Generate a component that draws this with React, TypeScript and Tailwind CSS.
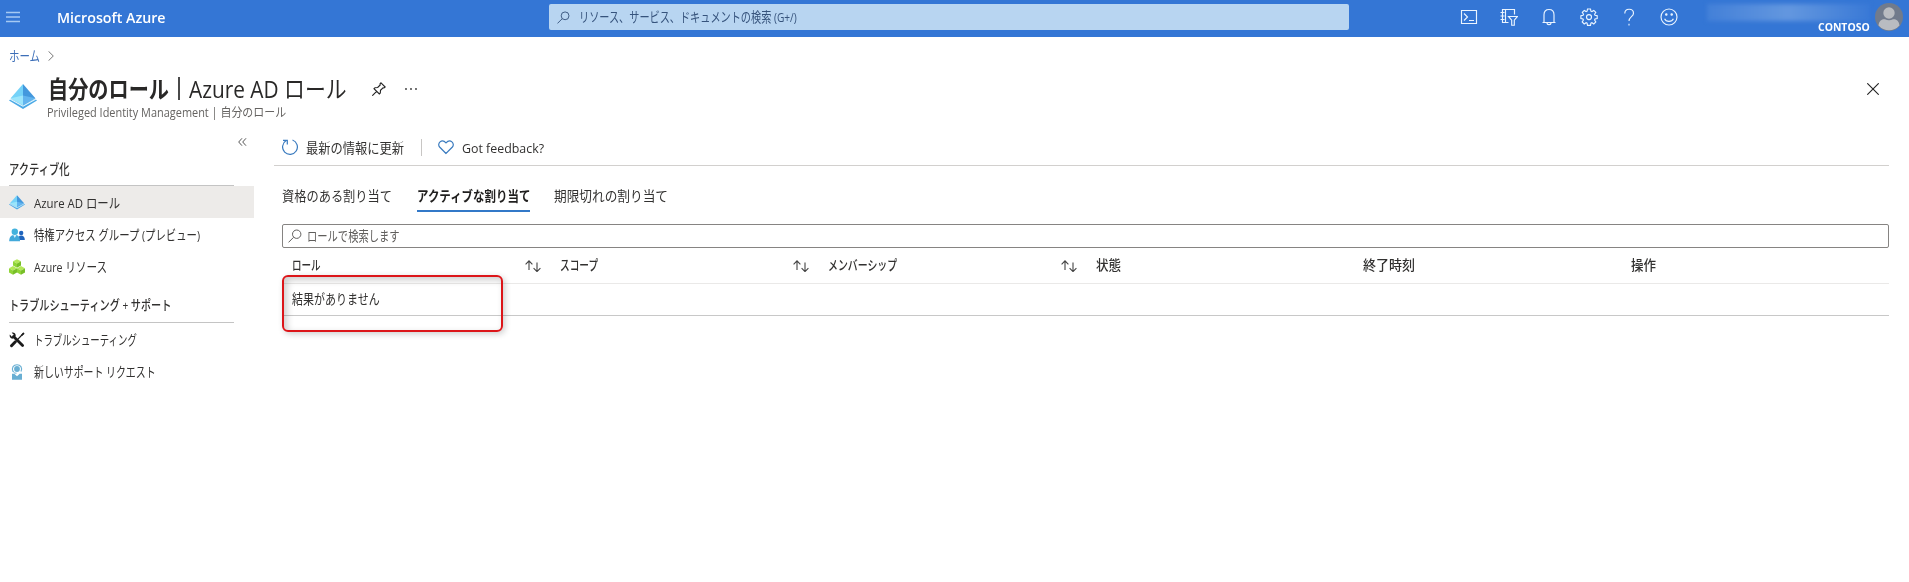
import { useLayoutEffect, useRef, useState } from 'react';

const FONT = "font-['Open_Sans','Noto_Sans_CJK_JP',sans-serif]";

/* One line of text condensed or widened to an exact width. */
function Fit({ w, className = '', children }: { w: number; className?: string; children: string }) {
  const ref = useRef<HTMLSpanElement>(null);
  const [scale, setScale] = useState(1);
  useLayoutEffect(() => {
    if (ref.current) setScale(w / ref.current.offsetWidth);
  }, [w]);
  return (
    <span className={`flex shrink-0 items-center ${className}`} style={{ width: w }}>
      <span ref={ref} className="inline-block origin-left whitespace-nowrap" style={{ transform: `scaleX(${scale})` }}>
        {children}
      </span>
    </span>
  );
}

function Pyramid({ className }: { className: string }) {
  return (
    <svg viewBox="0 0 28 28" className={className}>
      <path d="M0 18.500 2 16.800 14 23 26 16.800 28 18.500 14 27Z" fill="#4aa9e6" />
      <path d="M14 2 1.600 16.300 14 23.300Z" fill="#74d2f8" />
      <path d="M14 2 26.400 16.300 14 23.300Z" fill="#4398dd" />
      <path d="M14 13.500 1.600 16.300 14 23.300Z" fill="#9be5fb" />
      <path d="M14 13.500 26.400 16.300 14 23.300Z" fill="#62b4ee" />
      <path d="M1 17.100 14 24.200 27 17.100" fill="none" stroke="#e2f6fe" strokeWidth="1.100" />
    </svg>
  );
}

function People() {
  return (
    <svg viewBox="0 0 16 16" className="size-4">
      <circle cx="12.200" cy="6" r="2.200" fill="#2065bd" />
      <path d="M9 13c0-3 1-4.600 3.200-4.600s3.600 1.600 3.600 4.600Z" fill="#2065bd" />
      <circle cx="5.800" cy="4.700" r="3.200" fill="#43b2dd" />
      <path d="M.200 14.200c0-4.300 2-6.200 5.600-6.200s5.200 1.900 5.200 6.200Z" fill="#43a9da" />
      <path d="M4.200 8.100h3.200l-1.600 2.900Z" fill="#d8f1fb" />
    </svg>
  );
}

function Cube({ x, y }: { x: number; y: number }) {
  return (
    <g transform={`translate(${x} ${y})`}>
      <path d="M4 0 8 2.100 4 4.300 0 2.100Z" fill="#b4e858" />
      <path d="M0 2.100 4 4.300V8.600L0 6.400Z" fill="#8fd437" />
      <path d="M8 2.100 4 4.300V8.600l4-2.200Z" fill="#78bf28" />
    </g>
  );
}

function Cubes() {
  return (
    <svg viewBox="0 0 16 16" className="size-4">
      <Cube x={4} y={0.2} />
      <Cube x={0} y={7.1} />
      <Cube x={8} y={7.1} />
    </svg>
  );
}

function Tools() {
  return (
    <svg viewBox="0 0 16 16" className="size-4">
      <path d="M4.500 4.500 13.600 13.600" stroke="#1b1b1b" strokeWidth="2.800" strokeLinecap="round" />
      <path d="M2.700.700 4.800 2.800 4.400 4.300 2.900 4.700.800 2.600C.100 4.600 1.600 7 4 6.600L6.700 4.300C7.100 1.800 5 0 2.700.700Z" fill="#1b1b1b" />
      <path d="M14.800 1 8.500 7.600" stroke="#1b1b1b" strokeWidth="1.300" />
      <path d="M14.200.400 15.600 1.800 13 3.900 12 3Z" fill="#1b1b1b" />
      <path d="M6.400 9.800 2.500 13.700" stroke="#1b1b1b" strokeWidth="3" strokeLinecap="round" />
    </svg>
  );
}

function SupportPerson() {
  return (
    <svg viewBox="0 0 16 16" className="size-4">
      <path d="M4 7.500C2.300 3.500 4.500.700 8 .700s5.700 2.800 4 6.800" fill="none" stroke="#69afd3" strokeWidth="1.100" />
      <circle cx="8" cy="5" r="2.900" fill="#69afd3" />
      <path d="M4 7c.500 1.700 1.800 2.200 3.500 2.200" fill="none" stroke="#69afd3" />
      <path d="M3 9.700h2.300L8 12.200l2.700-2.500H13v6H3Z" fill="#69afd3" />
    </svg>
  );
}

function Magnifier({ className }: { className: string }) {
  return (
    <svg viewBox="0 0 14 14" fill="none" stroke="currentColor" className={className}>
      <circle cx="8.700" cy="5.200" r="4.200" />
      <path d="M5.600 8.300.500 13.400" />
    </svg>
  );
}

function HeaderIcons() {
  const cls = 'size-[18px]';
  const p = { viewBox: '0 0 18 18', fill: 'none', stroke: 'currentColor', strokeWidth: 1.15, className: cls };
  const teeth = 'M7.500 1h3l.4 2.200 1 .400 1.900-1.200 2 2-1.200 1.900.400 1 2.200.400v2.900l-2.200.400-.400 1 1.200 1.900-2 2-1.900-1.200-1 .400-.400 2.200h-3l-.400-2.200-1-.400-1.900 1.200-2-2 1.200-1.900-.400-1L.900 10.600V7.700l2.200-.400.400-1L2.300 4.400l2-2 1.800 1.200 1-.400Z';
  return (
    <div className="flex items-center gap-[22px] text-[#eaf4ff]">
      <svg {...p}><path d="M1.500 2.500h15v13h-15ZM4 5.500 7.500 9 4 12.500M9 12.500h5" /></svg>
      <svg {...p}>
        <path d="M8.500 14.500h-6v-13h12v5M5.500 1.500v13M.500 4.500h4M.500 8h4M.500 11.500h4" />
        <path d="M8.500 8.500h9l-3.200 3.700v5h-2.600v-5Z" />
      </svg>
      <svg {...p}><path d="M2.500 14.500h13M4 14.500V6.800C4 3.500 6 1.500 9 1.500s5 2 5 5.300v7.700M7 14.700c0 2.600 4 2.600 4 0" /></svg>
      <svg {...p}><path d={teeth} /><circle cx="9" cy="9.100" r="2.500" /></svg>
      <svg {...p}><path d="M4.800 5.400c0-2.500 1.800-4.200 4.300-4.200 2.600 0 4.400 1.600 4.400 4 0 3.400-4.500 3.600-4.500 7.800" /><path d="M9 15.800v1.600" /></svg>
      <svg {...p}>
        <circle cx="9" cy="9" r="8" /><path d="M4.600 10.800c1.500 3.500 7.300 3.500 8.800 0" />
        <circle cx="6.300" cy="6.500" r=".7" fill="currentColor" /><circle cx="11.700" cy="6.500" r=".7" fill="currentColor" />
      </svg>
    </div>
  );
}

function TopBar() {
  return (
    <header className="flex h-[37px] items-center bg-[#3476d5] pb-[3px] text-white">
      <svg viewBox="0 0 14 12" className="ml-1.5 mr-[37px] h-3 w-3.5 shrink-0" stroke="#a5c9f3" strokeWidth="1.300">
        <path d="M0 1.500h14M0 6h14M0 10.500h14" />
      </svg>
      <Fit w={109} className="text-[15px] font-semibold">Microsoft Azure</Fit>
      <div className="ml-[383px] flex h-[26px] w-[800px] shrink-0 items-center rounded-xs bg-[#b8d5f1] pl-2 text-[#36537c]">
        <Magnifier className="mr-[9px] size-[13px]" />
        <Fit w={218} className="text-[13.500px]">リソース、サービス、ドキュメントの検索 (G+/)</Fit>
      </div>
      <div className="ml-[111px]"><HeaderIcons /></div>
      <div className="ml-[29px] flex w-[163px] flex-col items-end pt-[3px]">
        <div className="h-[17px] w-full bg-linear-to-r from-[#4380d8] via-[#6397df] to-[#3979d6] blur-[2px]" />
        <Fit w={52} className="h-3 text-[11px] font-bold leading-3">CONTOSO</Fit>
      </div>
      <svg viewBox="0 0 28 28" className="ml-[5px] size-7 shrink-0">
        <circle cx="14" cy="14" r="14" fill="#717b8c" />
        <circle cx="14" cy="10" r="5.700" fill="#b9bcc1" />
        <path d="M3.500 22.500C4 17 8 15.800 10 16.300c2.500 1.200 5.500 1.200 8 0 2-.5 6 .7 6.500 6.200a14 14 0 0 1-21 0Z" fill="#b9bcc1" />
      </svg>
    </header>
  );
}

function PageTitle() {
  return (
    <div className="flex h-[69px] items-start text-[#292827]">
      <Pyramid className="ml-[9px] mt-[9px] size-7 shrink-0" />
      <div className="-mt-[3px] ml-2.5 flex flex-col">
        <div className="flex h-[37px] items-center">
          <Fit w={121} className="ml-px text-[24px] font-semibold">自分のロール</Fit>
          <span className="ml-[9px] h-[23px] w-[1.500px] bg-[#4a4a4a]" />
          <Fit w={158} className="ml-[9px] text-[24px]">Azure AD ロール</Fit>
          <svg viewBox="0 0 14 14" className="ml-[25px] size-3.5" fill="none" stroke="#222" strokeWidth="1.100">
            <path d="M9 .800 13.200 5 12 6 11 5.800 8.500 8.300 8.300 11 7.300 12 2 6.700 3 5.700 5.700 5.500 8.200 3 8 2ZM4.600 9.400.300 13.700" />
          </svg>
          <svg viewBox="0 0 12 2" className="ml-[19px] h-0.5 w-3" fill="#333">
            <circle cx="1" cy="1" r=".9" /><circle cx="6" cy="1" r=".9" /><circle cx="11" cy="1" r=".9" />
          </svg>
        </div>
        <Fit w={239} className="h-3 text-[12.500px] leading-3 text-[#666462]">Privileged Identity Management | 自分のロール</Fit>
      </div>
      <svg viewBox="0 0 12 12" className="ml-auto mr-[30px] mt-2.5 size-3" stroke="#222" strokeWidth="1.100">
        <path d="M.300.300 11.700 11.700M11.700.300.300 11.700" />
      </svg>
    </div>
  );
}

function Sidebar() {
  const item = 'flex h-8 items-center gap-[9px] pl-[9px] text-[13.500px]';
  return (
    <nav className="w-[254px] shrink-0 text-[#323130]">
      <svg viewBox="0 0 9 8" className="ml-[238px] mt-0.5 h-2 w-[9px]" fill="none" stroke="#555" strokeWidth="1">
        <path d="M4 .3.700 4 4 7.700M8 .3 4.700 4 8 7.700" />
      </svg>
      <div className="ml-[9px] mt-2 flex h-8 w-[225px] items-center border-b border-[#c4c4c4]">
        <Fit w={61} className="text-[13.500px] font-medium">アクティブ化</Fit>
      </div>
      <div className={`${item} bg-[#edebe9] pt-0.5`}><Pyramid className="-mt-0.5 size-4" /><Fit w={86}>Azure AD ロール</Fit></div>
      <div className={`${item} pt-0.5`}><People /><Fit w={166}>特権アクセス グループ (プレビュー)</Fit></div>
      <div className={`${item} pt-0.5`}><Cubes /><Fit w={73}>Azure リソース</Fit></div>
      <div className="ml-[9px] flex h-[41px] w-[225px] items-center border-b border-[#c4c4c4] pt-[7px]">
        <Fit w={162} className="text-[13.500px] font-medium">トラブルシューティング + サポート</Fit>
      </div>
      <div className={`${item} pt-0.5`}><Tools /><Fit w={103}>トラブルシューティング</Fit></div>
      <div className={`${item} pt-0.5`}><SupportPerson /><Fit w={122}>新しいサポート リクエスト</Fit></div>
    </nav>
  );
}

function Toolbar() {
  return (
    <div className="flex h-[30px] items-start border-b border-[#d2d0ce] pl-2 text-[13.500px] text-[#323130]">
      <svg viewBox="0 0 16 16" className="mt-[3px] size-4" fill="none" stroke="#3a7bbf" strokeWidth="1.200">
        <path d="M10.500 1a7.400 7.400 0 1 1-6.300.600M1 1.300h4.300v4.300" />
      </svg>
      <Fit w={98} className="ml-2 mt-0.5 h-5">最新の情報に更新</Fit>
      <span className="ml-[17px] mt-[3px] h-[17px] w-px bg-[#c8c6c4]" />
      <svg viewBox="0 0 16 16" className="ml-4 mt-[3px] size-4" fill="none" stroke="#3a7bbf" strokeWidth="1.200">
        <path d="M8 14.500 1.600 8C-1.300 4.700 3.600-.900 8 3.800 12.400-.900 17.300 4.700 14.400 8Z" />
      </svg>
      <Fit w={82} className="ml-2 mt-[3px] h-5 text-[13px]">Got feedback?</Fit>
    </div>
  );
}

function Tabs() {
  return (
    <div className="flex h-[58px] items-start pl-2 pt-4 text-[14px] text-[#323130]">
      <Fit w={110} className="mr-[25px] h-[26px]">資格のある割り当て</Fit>
      <Fit w={113} className="mr-6 h-[30px] border-b-2 border-[#3379c8] pb-0.5 font-semibold text-[#201f1e]">アクティブな割り当て</Fit>
      <Fit w={114} className="h-[26px]">期限切れの割り当て</Fit>
    </div>
  );
}

function SortArrows() {
  return (
    <svg viewBox="0 0 16 12" className="h-3 w-4" fill="none" stroke="#444" strokeWidth="1.100">
      <path d="M4 10V1M.600 4.300 4 .800l3.400 3.500M12 2.500v9M8.600 8.100 12 11.600l3.400-3.500" />
    </svg>
  );
}

const COLUMNS = [
  { label: 'ロール', w: 29, sort: true },
  { label: 'スコープ', w: 38, sort: true },
  { label: 'メンバーシップ', w: 69, sort: true },
  { label: '状態', w: 25, sort: false },
  { label: '終了時刻', w: 52, sort: false },
  { label: '操作', w: 25, sort: false },
];

function RoleTable() {
  return (
    <div className="relative ml-2 text-[13.500px] text-[#323130]">
      <div className="grid h-9 grid-cols-6 border-b border-[#eae9e8]">
        {COLUMNS.map((c) => (
          <div key={c.label} className="flex items-center justify-between pl-2.5 pr-[9px]">
            <Fit w={c.w} className="font-medium">{c.label}</Fit>
            {c.sort && <SortArrows />}
          </div>
        ))}
      </div>
      <div className="flex h-8 items-center border-b border-[#c8c8c8] pl-2.5">
        <Fit w={88}>結果がありません</Fit>
      </div>
      <div className="absolute left-0 top-[27px] h-[57px] w-[221px] rounded-md border-2 border-[#dc1519] shadow-[2px_2px_6px_rgba(0,0,0,0.2),inset_3px_3px_7px_rgba(0,0,0,0.2)]" />
    </div>
  );
}

export default function App() {
  return (
    <div className={`h-[582px] w-full overflow-hidden bg-white ${FONT}`}>
      <TopBar />
      <div className="flex h-[38px] items-center pl-[9px]">
        <Fit w={31} className="text-[13.500px] text-[#3d6fb8]">ホーム</Fit>
        <svg viewBox="0 0 6 10" className="ml-2 h-2.5 w-1.5" fill="none" stroke="#777" strokeWidth="1"><path d="M.500.300 5.300 5 .500 9.700" /></svg>
      </div>
      <div className="-mt-[2px]"><PageTitle /></div>
      <div className="-mt-[6px] flex">
        <Sidebar />
        <main className="ml-5 w-[1615px]">
          <Toolbar />
          <Tabs />
          <div className="ml-2 flex h-6 items-center rounded-xs border border-[#868482] pl-[5px] text-[#605e5c]">
            <Magnifier className="mr-[5px] size-3.5" />
            <Fit w={93} className="text-[13.500px]">ロールで検索します</Fit>
          </div>
          <RoleTable />
        </main>
      </div>
    </div>
  );
}
